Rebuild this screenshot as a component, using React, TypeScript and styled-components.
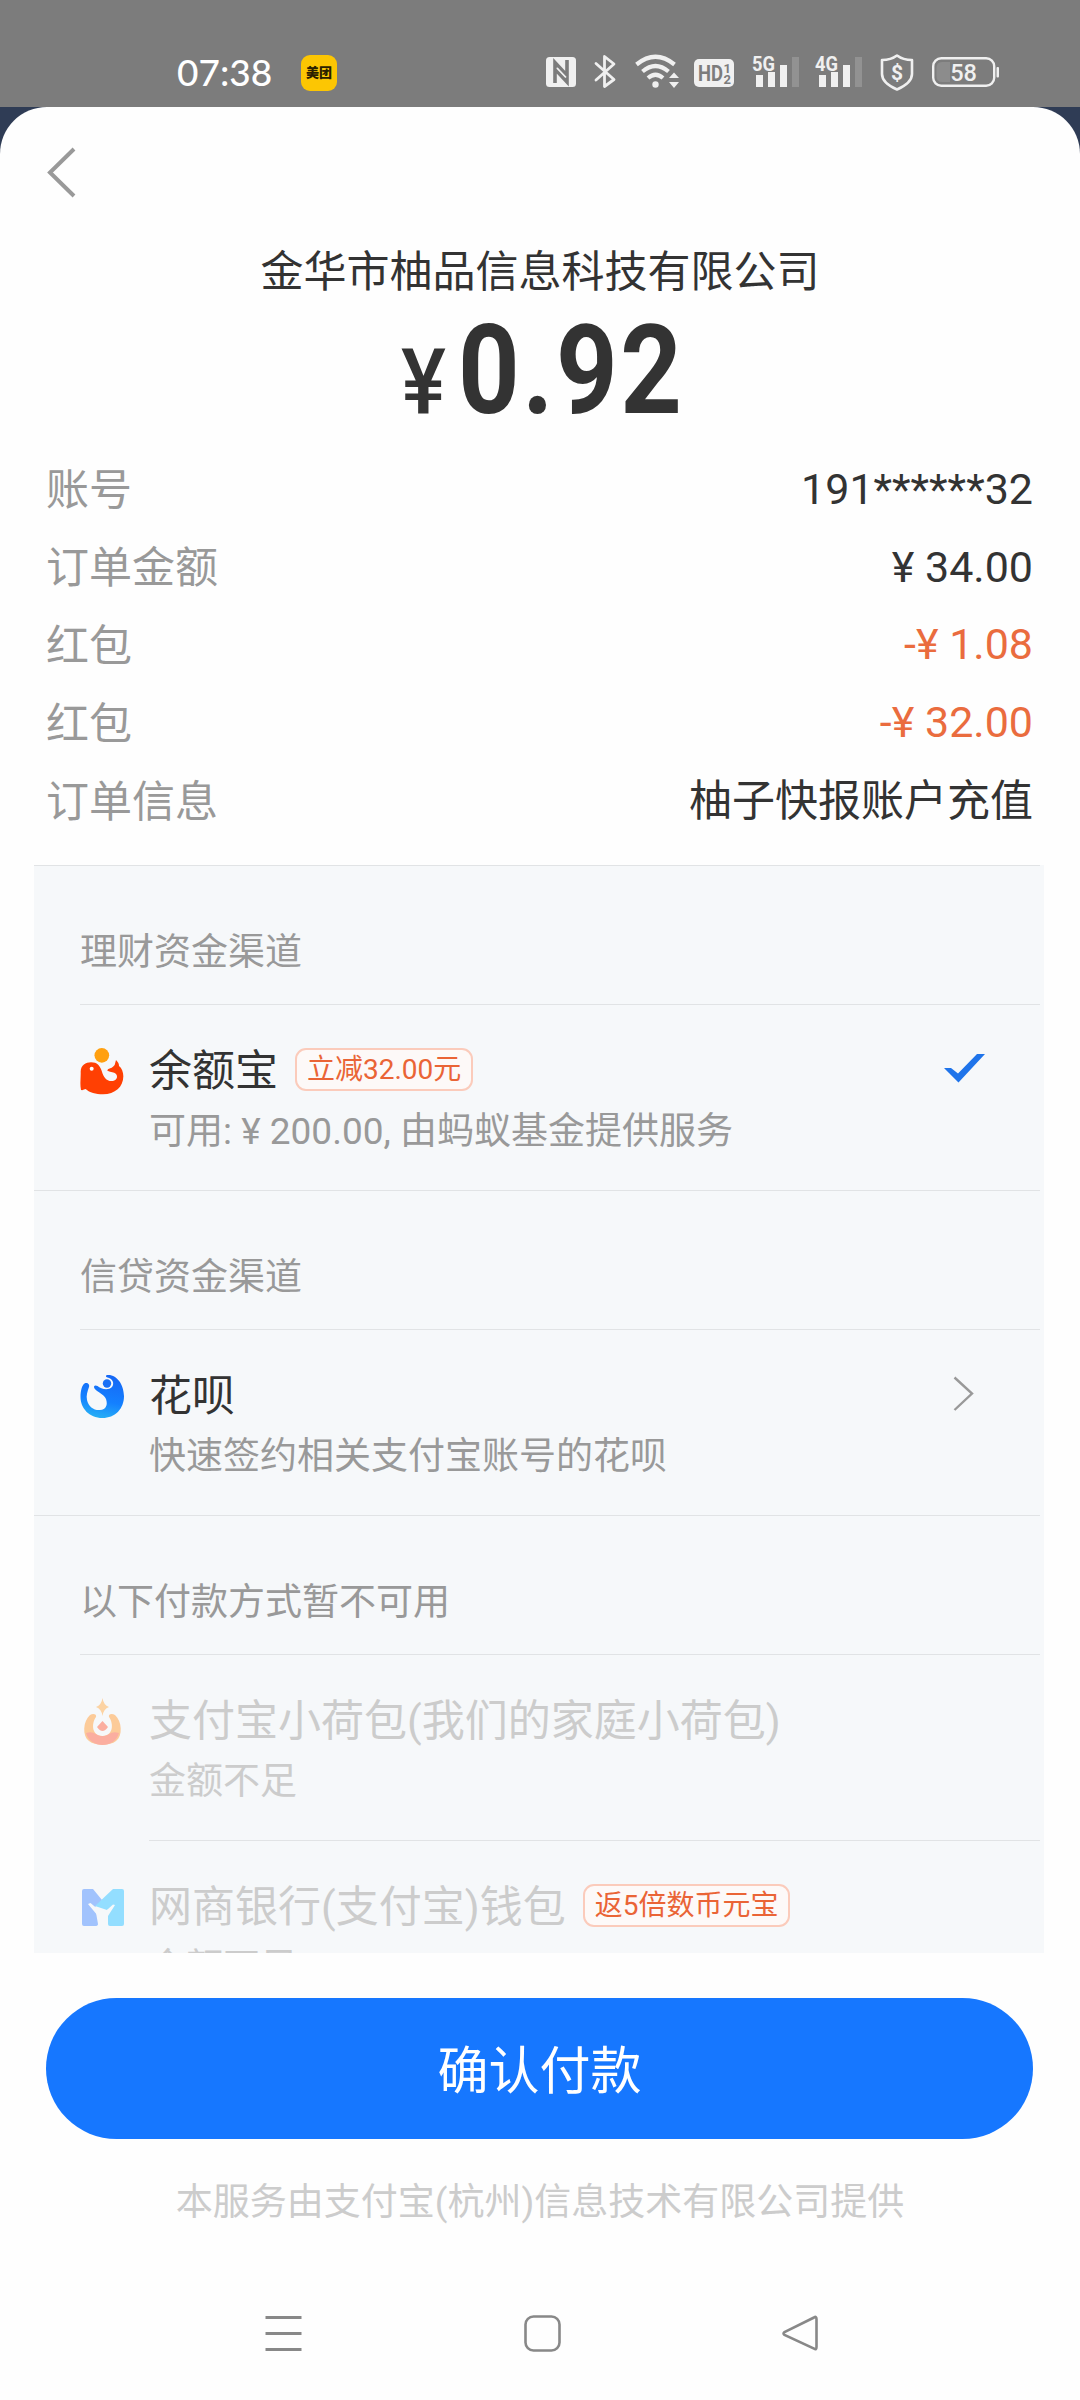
import React from "react";
import styled, { createGlobalStyle } from "styled-components";

const GlobalStyle = createGlobalStyle`
  * { box-sizing: border-box; }
  body {
    margin: 0;
    background: #2f3c55;
    font-family: Roboto, "Noto Sans CJK SC", sans-serif;
    color: #333;
  }
`;

const Screen = styled.div`
  width: 1080px;
  height: 2400px;
  display: flex;
  flex-direction: column;
  overflow: hidden;
  background: #2f3c55;
`;

/* ---------- status bar ---------- */

const StatusBar = styled.div`
  height: 107px;
  flex: none;
  display: flex;
  align-items: flex-start;
  padding: 54px 80px 0 177px;
  background: #7c7c7c;
`;

const Clock = styled.div`
  width: 124px;
  font: 500 37px/36px Lato, sans-serif;
  color: #fff;
  white-space: nowrap;
`;

const AppBadge = styled.div`
  width: 36px;
  height: 36px;
  margin-top: 1px;
  border-radius: 9px;
  background: #fcc603;
  color: #2a2000;
  font: 900 13px/34px "Noto Sans CJK SC", sans-serif;
  text-align: center;
`;

const StatusIcons = styled.div`
  display: flex;
  align-items: flex-start;
  margin-left: auto;
`;

const Glyph = styled.svg<{ $gap?: number; $top?: number }>`
  display: block;
  flex: none;
  margin: ${(p) => p.$top ?? 0}px 0 0 ${(p) => p.$gap ?? 0}px;
`;

/* ---------- sheet ---------- */

const Sheet = styled.main`
  flex: 1;
  display: flex;
  flex-direction: column;
  background: #fefefe;
  border-radius: 47px 47px 0 0;
`;

const TopBar = styled.div`
  height: 135px;
  flex: none;
  padding: 40px 0 0 46px;
`;

const Merchant = styled.h1`
  margin: 0;
  font-weight: 400;
  font-size: 43px;
  line-height: 60px;
  text-align: center;
`;

const Amount = styled.div`
  display: flex;
  justify-content: center;
  align-items: baseline;
  height: 148px;
  flex: none;
  font-weight: 700;
  line-height: 138px;
`;

const Currency = styled.span`
  font-size: 91px;
  font-weight: 500;
  width: 57px;
  transform: scaleX(0.93);
  transform-origin: 0 50%;
`;

const Figure = styled.span`
  font-size: 125px;
  letter-spacing: 3px;
  width: 222px;
  transform: scaleX(0.86);
  transform-origin: 0 50%;
`;

const Details = styled.dl`
  margin: 0;
  padding: 0 47px 0 46px;
`;

const DetailRow = styled.div`
  display: flex;
  justify-content: space-between;
  height: 78px;
  font-size: 43px;
  line-height: 78px;
`;

const Term = styled.dt`
  padding-top: 1px;
  color: #999;
`;

const Value = styled.dd<{ $discount?: boolean }>`
  margin: ${(p) => (p.$discount ? "-1px" : "0")} 0 0;
  color: ${(p) => (p.$discount ? "#ea6c3e" : "#333")};
`;

/* ---------- channels ---------- */

const Channels = styled.section`
  height: 1088px;
  flex: none;
  margin: 25px 36px 0 34px;
  overflow: hidden;
  background: #f6f8fa;
`;

const Rule = styled.div<{ $inset?: number }>`
  height: 1px;
  margin: 0 4px 0 ${(p) => p.$inset ?? 0}px;
  background: #e1e3e5;
`;

const GroupTitle = styled.h2`
  height: 138px;
  margin: 0;
  padding: 57px 0 0 46px;
  font-weight: 400;
  font-size: 37px;
  line-height: 60px;
  color: #999;
`;

const ChannelRow = styled.div`
  display: flex;
  height: 185px;
  padding: 36px 0 0 46px;
`;

const IconSlot = styled.div`
  width: 69px;
  flex: none;
`;

const ChannelBody = styled.div`
  flex: 1;
`;

const NameLine = styled.div`
  display: flex;
  align-items: flex-start;
  height: 62px;
`;

const ChannelName = styled.span<{ $muted?: boolean }>`
  font-size: 43px;
  line-height: 60px;
  color: ${(p) => (p.$muted ? "#ccc" : "#333")};
`;

const Hint = styled.div<{ $muted?: boolean }>`
  font-size: 37px;
  line-height: 58px;
  color: ${(p) => (p.$muted ? "#ccc" : "#999")};
`;

const Tag = styled.span`
  height: 43px;
  margin: 7px 0 0 17px;
  padding: 0 10px;
  border: 2px solid #fbcbbb;
  border-radius: 11px;
  background: #fdf9f8;
  color: #ea6436;
  font-size: 28px;
  line-height: 40px;
`;

const Trailing = styled.div`
  width: 101px;
  flex: none;
`;

/* ---------- footer ---------- */

const ConfirmButton = styled.button`
  height: 141px;
  flex: none;
  margin: 45px 47px 0 46px;
  padding: 0;
  border: 0;
  border-radius: 71px;
  background: #1677ff;
  color: #fff;
  font: 400 51px/147px Roboto, "Noto Sans CJK SC", sans-serif;
`;

const Provider = styled.p`
  margin: 34px 0 0;
  font-size: 37px;
  line-height: 60px;
  text-align: center;
  color: #ccc;
`;

const NavBar = styled.nav`
  display: flex;
  justify-content: space-between;
  margin-top: auto;
  padding: 0 261px 48px 265px;
`;

/* ---------- drawings ---------- */

const WHITE = "#f0f0f0";
const BAR = "#7c7c7c";

const Signal = ({ label, gap }: { label: string; gap: number }) => (
  <Glyph $gap={gap} $top={-8} width={48} height={44} viewBox="0 -8 48 44">
    <text x="0" y="17" fill={WHITE} fontFamily="Roboto, sans-serif" fontWeight="700" fontSize="21" textLength="23" lengthAdjust="spacingAndGlyphs">
      {label}
    </text>
    <g fill={WHITE}>
      <rect x="4" y="21" width="7" height="12" />
      <rect x="16" y="18" width="7" height="15" />
      <rect x="28" y="11" width="7" height="22" />
      <rect x="40" y="3" width="7" height="30" fill="#929292" />
    </g>
  </Glyph>
);

const StatusGlyphs = () => (
  <StatusIcons>
    <Glyph width={30} height={36} viewBox="0 0 30 36">
      <rect x="0" y="3" width="30" height="30" rx="3.5" fill={WHITE} />
      <path d="M9 29 V8.5 L21 21.5 M9 15 L21 28 V6" fill="none" stroke={BAR} strokeWidth="3.6" />
      <path d="M11 14 l9 9.5" stroke={WHITE} strokeWidth="1.8" />
    </Glyph>
    <Glyph $gap={18} width={24} height={36} viewBox="0 0 24 36">
      <path d="M2 9.5 L20 25.5 L10.5 32.5 V2.5 L20 10 L2 26" fill="none" stroke={WHITE} strokeWidth="2.8" strokeLinejoin="round" strokeLinecap="round" />
    </Glyph>
    <Glyph $gap={17} width={46} height={36} viewBox="0 0 46 36">
      <g fill="none" stroke={WHITE} strokeWidth="4.2">
        <path d="M1.5 10.5 Q20.5 -5 39.5 10.5" />
        <path d="M7.5 17.5 Q20.5 6.5 33.5 17.5" />
        <path d="M13 24 Q20.5 17.5 28 24" />
      </g>
      <circle cx="20.5" cy="30.5" r="3.2" fill={WHITE} />
      <path d="M34 24 L39 18.5 L44 24 Z M34 28 L39 34 L44 28 Z" fill={WHITE} />
    </Glyph>
    <Glyph $gap={13} width={40} height={36} viewBox="0 0 40 36">
      <rect x="0" y="5" width="40" height="28" rx="5" fill={WHITE} />
      <g fill={BAR} fontFamily="Roboto, sans-serif" fontWeight="700">
        <text x="4" y="27" fontSize="22" textLength="25" lengthAdjust="spacingAndGlyphs">HD</text>
        <text x="29.5" y="18.5" fontSize="13">1</text>
        <text x="29.5" y="30" fontSize="13">2</text>
      </g>
    </Glyph>
    <Signal label="5G" gap={18} />
    <Signal label="4G" gap={15} />
    <Glyph $gap={17} width={34} height={38} viewBox="0 0 34 38">
      <path d="M17 1.5 C21 4.5 27 6 32 6 V20 C32 27 25 32 17 35.5 C9 32 2 27 2 20 V6 C7 6 13 4.5 17 1.5 Z" fill="none" stroke={WHITE} strokeWidth="2.6" strokeLinejoin="round" />
      <text x="17" y="26" fill={WHITE} fontFamily="Roboto, sans-serif" fontWeight="700" fontSize="21" textAnchor="middle">$</text>
    </Glyph>
    <Glyph $gap={18} width={68} height={36} viewBox="0 0 68 36">
      <rect x="1.2" y="4.2" width="61" height="27.6" rx="8" fill="none" stroke={WHITE} strokeWidth="2.4" />
      <path d="M10 8 H18 V28 H10 Q4.5 28 4.5 22 V14 Q4.5 8 10 8 Z" fill="#8c8c8c" />
      <rect x="64.5" y="13" width="2.5" height="10.5" rx="1" fill={WHITE} />
      <text x="31.5" y="26.5" fill={WHITE} fontFamily="Roboto, sans-serif" fontWeight="500" fontSize="23.5" textAnchor="middle">58</text>
    </Glyph>
  </StatusIcons>
);

const YuebaoIcon = () => (
  <Glyph $top={6} width={45} height={49} viewBox="33 50 135 147">
    <circle cx="98.5" cy="75" r="22" fill="#ffa010" />
    <path
      d="M36 179 C32 160 36 140 35 124 C36 104 50 96 66 96 C85 96 92 106 98 121 C103 139 112 152 127 152 C143 152 148 139 141 131 C134 124 127 127 115 121 C117 112 128 117 137 104 C139 99 139 94 141 89 C148 96 150 101 150 107 C158 113 163 125 163 138 C163 170 138 192 102 192 C80 192 62 187 50 176 C46 176 42 181 36 179 Z"
      fill="#ff4003"
    />
    <circle cx="68" cy="115" r="6" fill="#fff" />
  </Glyph>
);

const HuabeiIcon = () => (
  <Glyph $top={6} width={45} height={49} viewBox="0 0 45 49">
    <defs>
      <linearGradient id="huabei" x1="0.6" y1="0" x2="0.4" y2="1">
        <stop offset="0" stopColor="#1668f5" />
        <stop offset="0.6" stopColor="#1480ff" />
        <stop offset="1" stopColor="#27b0f5" />
      </linearGradient>
    </defs>
    <path
      d="M27 3 C37 2 44 13 44 24 C44 37 35 46 22.5 46 C9 46 0.5 36 0.5 25 C0.5 19 2 13 4.5 11.5 C7 10 10 12 9 15 C7.500 19 6 24 7 28 C8.5 35 14 38.500 20 38 C26 37.500 28 33 26 27 C24 22 17 20 14.5 16.5 C13 14 15 12.5 17.5 14 C21 17 28 19 32 15 C35 11 32 6 27.5 5.5 C25.5 5 25.5 3.5 27 3 Z"
      fill="url(#huabei)"
    />
    <circle cx="27" cy="11.5" r="4.2" fill="#1a70f5" />
  </Glyph>
);

const PouchIcon = () => (
  <Glyph $top={5} width={45} height={50} viewBox="0 0 45 50">
    <path d="M10 19 C3 25 2 40 9 45 C15 50 30 50 36 45 C43 40 42 25 35 19 C32 17 28 18 29 21 C34 28 33 40 22.5 40 C12 40 11 28 16 21 C17 18 13 17 10 19 Z" fill="#fccb99" />
    <path d="M6 37 C14 34 16 40 22.5 40 C29 40 31 34 39 37 C37 45 30 49 22.5 49 C15 49 8 45 6 37 Z" fill="#fbaea0" />
    <path d="M22.5 25 L28 31 Q22.5 39 17 31 Z" fill="#fbaea0" />
    <path d="M22.5 2 Q23.5 9 29 11 Q23.5 13 22.5 20 Q21.5 13 16 11 Q21.5 9 22.5 2 Z" fill="#fcd3a3" />
  </Glyph>
);

const MybankIcon = () => (
  <Glyph $top={4} width={45} height={50} viewBox="0 0 45 50">
    <path d="M4 8 H13 L22 19 L15 26 L18 43 Q18 45 15 45 H4 Q2 45 2 43 V10 Q2 8 4 8 Z" fill="#a1c3fd" />
    <path d="M33 8 H42 Q44 8 44 10 V43 Q44 45 42 45 H30 Q28 45 28 43 V33 L34 25 L27 29 L15 25 Z" fill="#93deff" />
    <path d="M8 23 L18 35 V45.5 H28 V35 L35 24 L33 23.500 L23 32.500 L10.500 22 Z" fill="#f6f8fa" />
  </Glyph>
);

const CheckMark = () => (
  <Glyph $top={12} width={44} height={32} viewBox="0 0 44 32">
    <path d="M1 15 H8 L15 20.5 L34 1 H42 L15.5 29.5 Z" fill="#1f74ea" />
  </Glyph>
);

const ChevronRight = () => (
  <Glyph $gap={10} $top={10} width={24} height={36} viewBox="0 0 24 36">
    <path d="M1.5 1.5 L19 17.5 L1.5 34" fill="none" stroke="#999" strokeWidth="2.4" />
  </Glyph>
);

type ChannelProps = {
  icon: React.ReactNode;
  name: string;
  hint: string;
  tag?: string;
  muted?: boolean;
  trailing?: React.ReactNode;
};

const Channel = ({ icon, name, hint, tag, muted, trailing }: ChannelProps) => (
  <ChannelRow>
    <IconSlot>{icon}</IconSlot>
    <ChannelBody>
      <NameLine>
        <ChannelName $muted={muted}>{name}</ChannelName>
        {tag && <Tag>{tag}</Tag>}
      </NameLine>
      <Hint $muted={muted}>{hint}</Hint>
    </ChannelBody>
    {trailing && <Trailing>{trailing}</Trailing>}
  </ChannelRow>
);

const details = [
  { term: "账号", value: "191******32" },
  { term: "订单金额", value: "¥ 34.00" },
  { term: "红包", value: "-¥ 1.08", discount: true },
  { term: "红包", value: "-¥ 32.00", discount: true },
  { term: "订单信息", value: "柚子快报账户充值" },
];

export default function App() {
  return (
    <Screen>
      <GlobalStyle />
      <StatusBar>
        <Clock>07:38</Clock>
        <AppBadge>美团</AppBadge>
        <StatusGlyphs />
      </StatusBar>
      <Sheet>
        <TopBar>
          <Glyph width={32} height={52} viewBox="0 0 32 52">
            <path d="M28 2 L4 25.5 L28 49" fill="none" stroke="#999" strokeWidth="4" />
          </Glyph>
        </TopBar>
        <Merchant>金华市柚品信息科技有限公司</Merchant>
        <Amount>
          <Currency>¥</Currency>
          <Figure>0.92</Figure>
        </Amount>
        <Details>
          {details.map((d, i) => (
            <DetailRow key={i}>
              <Term>{d.term}</Term>
              <Value $discount={d.discount}>{d.value}</Value>
            </DetailRow>
          ))}
        </Details>
        <Channels>
          <Rule />
          <GroupTitle>理财资金渠道</GroupTitle>
          <Rule $inset={46} />
          <Channel icon={<YuebaoIcon />} name="余额宝" tag="立减32.00元" hint="可用: ¥ 200.00, 由蚂蚁基金提供服务" trailing={<CheckMark />} />
          <Rule />
          <GroupTitle>信贷资金渠道</GroupTitle>
          <Rule $inset={46} />
          <Channel icon={<HuabeiIcon />} name="花呗" hint="快速签约相关支付宝账号的花呗" trailing={<ChevronRight />} />
          <Rule />
          <GroupTitle>以下付款方式暂不可用</GroupTitle>
          <Rule $inset={46} />
          <Channel icon={<PouchIcon />} name="支付宝小荷包(我们的家庭小荷包)" hint="金额不足" muted />
          <Rule $inset={115} />
          <Channel icon={<MybankIcon />} name="网商银行(支付宝)钱包" tag="返5倍数币元宝" hint="金额不足" muted />
        </Channels>
        <ConfirmButton>确认付款</ConfirmButton>
        <Provider>本服务由支付宝(杭州)信息技术有限公司提供</Provider>
        <NavBar>
          <Glyph width={37} height={37} viewBox="0 0 37 37">
            <path d="M0.5 2.5 H36.5 M0.5 18.5 H36.5 M0.5 34.5 H36.5" stroke="#888" strokeWidth="3" />
          </Glyph>
          <Glyph width={37} height={37} viewBox="0 0 37 37">
            <rect x="1.5" y="1.5" width="34" height="34" rx="8" fill="none" stroke="#888" strokeWidth="2.6" />
          </Glyph>
          <Glyph width={37} height={37} viewBox="0 0 37 37">
            <path d="M32 2.5 Q34.5 0.8 34.5 4 V32 Q34.5 35.5 32 33.5 L2.5 20 Q0.5 18.5 2.5 17 Z" fill="none" stroke="#888" strokeWidth="2.6" />
          </Glyph>
        </NavBar>
      </Sheet>
    </Screen>
  );
}
